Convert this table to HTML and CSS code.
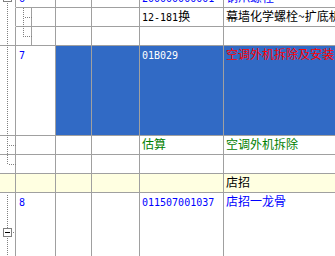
FILE: index.html
```html
<!DOCTYPE html>
<html>
<head>
<meta charset="utf-8">
<link rel="stylesheet" href="styles.css">
</head>
<body>
<div class="view">
  <div class="grid">
    <!-- row 0 (scrolled, partly hidden) -->
    <div class="c tree"></div>
    <div class="c num span2 blue"><span class="d">6</span></div>
    <div class="c"></div>
    <div class="c"></div>
    <div class="c blue"><span class="d">200000000001</span></div>
    <div class="c blue">钢爪螺栓</div>

    <!-- row 1 -->
    <div class="c tree"></div>
    <div class="c sub"></div>
    <div class="c"></div>
    <div class="c"></div>
    <div class="c"></div>
    <div class="c"><span class="d">12-181</span>换</div>
    <div class="c">幕墙化学螺栓~扩底机械锚栓</div>

    <!-- row 2 -->
    <div class="c tree line"></div>
    <div class="c sub"></div>
    <div class="c"></div>
    <div class="c"></div>
    <div class="c"></div>
    <div class="c"></div>
    <div class="c"></div>

    <!-- row 3 selected -->
    <div class="c tree line"></div>
    <div class="c num span2 blue"><span class="d">7</span></div>
    <div class="c sel"></div>
    <div class="c sel"></div>
    <div class="c sel white"><span class="d">01B029</span></div>
    <div class="c sel red">空调外机拆除及安装</div>

    <!-- row 4 -->
    <div class="c tree line"></div>
    <div class="c span2"></div>
    <div class="c"></div>
    <div class="c"></div>
    <div class="c green">估算</div>
    <div class="c green">空调外机拆除</div>

    <!-- row 5 -->
    <div class="c tree line"></div>
    <div class="c span2"></div>
    <div class="c"></div>
    <div class="c"></div>
    <div class="c"></div>
    <div class="c"></div>

    <!-- row 6 group -->
    <div class="c tree line yel"></div>
    <div class="c span2 yel"></div>
    <div class="c yel"></div>
    <div class="c yel"></div>
    <div class="c yel"></div>
    <div class="c yel">店招</div>

    <!-- row 7 -->
    <div class="c tree"></div>
    <div class="c num span2 blue"><span class="d">8</span></div>
    <div class="c"></div>
    <div class="c"></div>
    <div class="c blue"><span class="d">011507001037</span></div>
    <div class="c blue">店招一龙骨</div>
  </div>

  <svg class="treelines" width="32" height="256" viewBox="0 0 32 256" shape-rendering="crispEdges">
    <g stroke="#808080" stroke-width="1" stroke-dasharray="1 1" fill="none">
      <line x1="7.5" y1="3" x2="7.5" y2="165"/>
      <line x1="9" y1="145.5" x2="16" y2="145.5"/>
      <line x1="9" y1="164.5" x2="16" y2="164.5"/>
      <line x1="23.5" y1="8" x2="23.5" y2="37"/>
      <line x1="25" y1="17.5" x2="32" y2="17.5"/>
      <line x1="25" y1="36.5" x2="32" y2="36.5"/>
      <line x1="7.5" y1="195" x2="7.5" y2="228"/>
      <line x1="7.5" y1="238" x2="7.5" y2="256"/>
      <line x1="13" y1="232.5" x2="14" y2="232.5"/>
    </g>
    <rect x="3.5" y="-6.5" width="8" height="8" fill="#fff" stroke="#808080"/>
    <rect x="3.5" y="228.5" width="8" height="8" fill="#fff" stroke="#808080"/>
    <line x1="5" y1="232.5" x2="10" y2="232.5" stroke="#000"/>
  </svg>
</div>
</body>
</html>
```

FILE: styles.css
```css
html, body {
  margin: 0;
  padding: 0;
  background: #fff;
}
.view {
  position: relative;
  width: 335px;
  height: 256px;
  overflow: hidden;
}
.grid {
  display: grid;
  grid-template-columns: 16px 16px 24px 36px 48px 84px 200px;
  grid-template-rows: 19px 19px 19px 90px 19px 19px 19px 80px;
  margin-top: -11px;
  width: 424px;
  font-family: "Noto Sans CJK SC", "Noto Sans", sans-serif;
  font-size: 12px;
  line-height: 14px;
  color: #000;
}
.c {
  box-sizing: border-box;
  border-right: 1px solid #a0a0a0;
  border-bottom: 1px solid #a0a0a0;
  padding: 1px 0 0 2px;
  white-space: nowrap;
  overflow: hidden;
}
.tree {
  border-bottom-color: transparent;
  padding: 0;
}
.tree.line {
  border-bottom-color: #a0a0a0;
}
.sub {
  padding: 0;
}
.span2 {
  grid-column: span 2;
}
.num {
  padding-left: 3px;
}
.d {
  font-family: "DejaVu Sans Mono", "Liberation Mono", monospace;
  font-size: 10px;
}
.blue { color: #0000ff; }
.red { color: #ff0000; }
.white { color: #ffffff; }
.green { color: #008000; }
.sel { background: #316ac5; }
.yel { background: #ffffe1; }
.treelines {
  position: absolute;
  left: 0;
  top: 0;
}
```
